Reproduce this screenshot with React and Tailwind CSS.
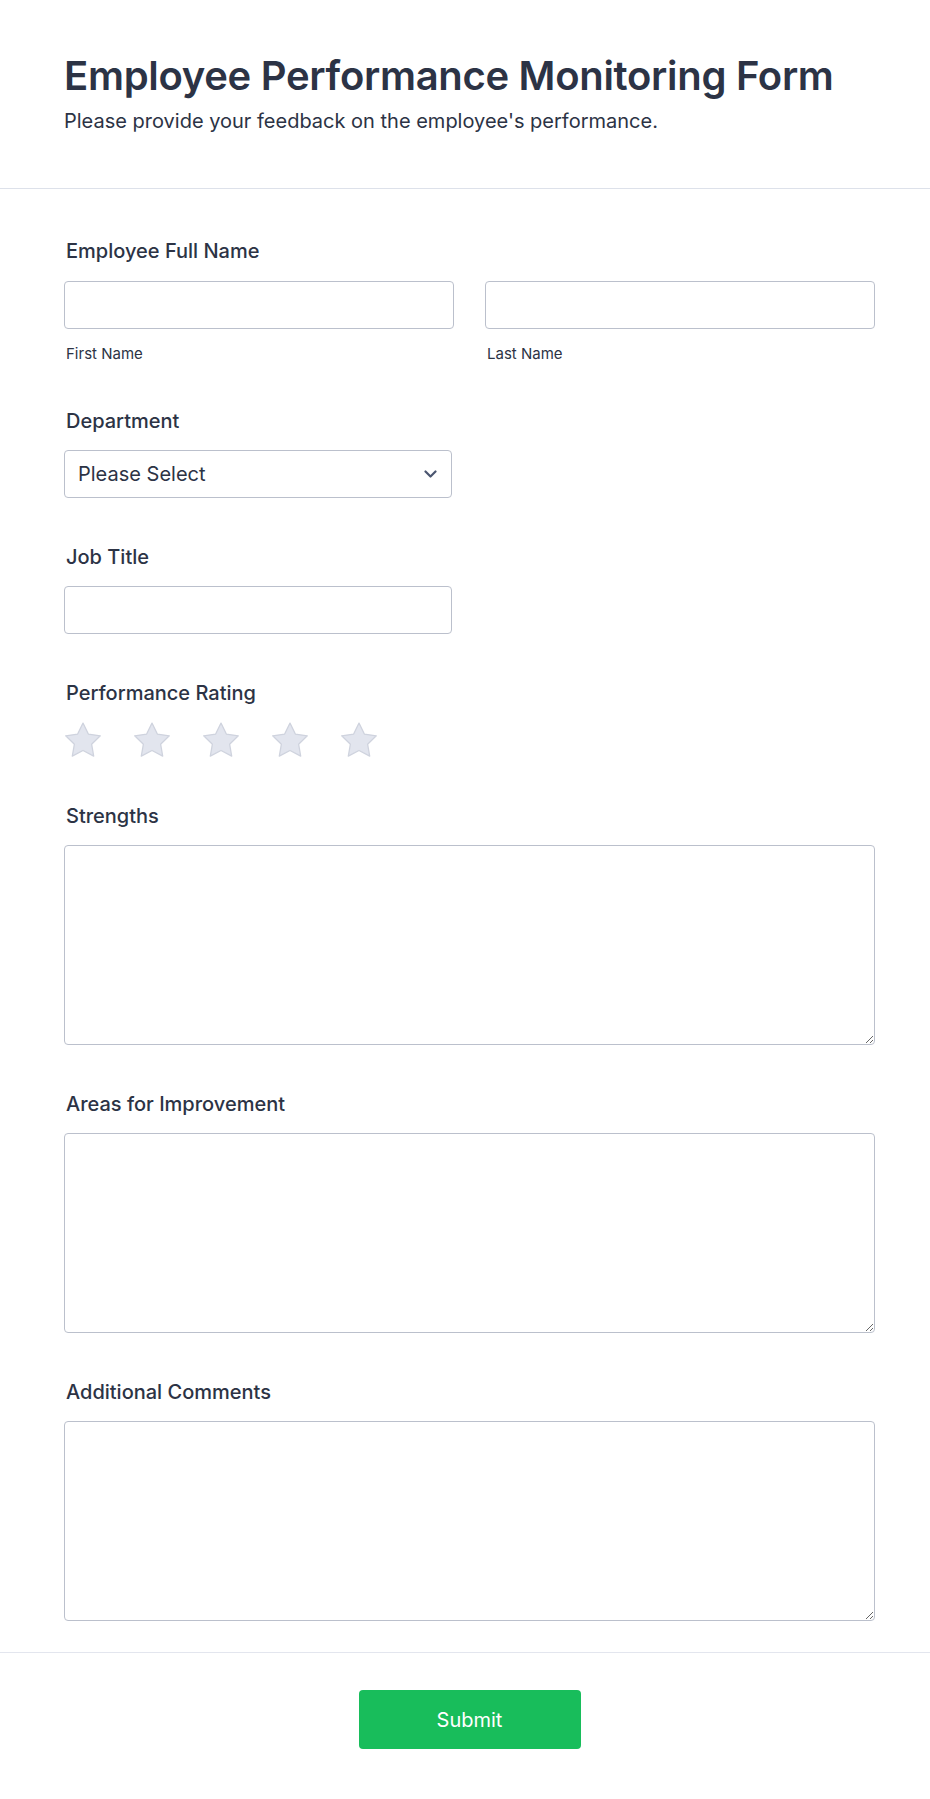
import React from "react";

function Star() {
  return (
    <svg width="38" height="35" viewBox="1.9 1.7 20.2 19.3" className="shrink-0">
      <path
        d="M12 2.3l2.95 6.05 6.6.95-4.8 4.63 1.15 6.57L12 17.4l-5.9 3.1 1.15-6.57-4.8-4.63 6.6-.95L12 2.3z"
        fill="#e2e5ee"
        stroke="#cfd3de"
        strokeWidth="0.7"
        strokeLinejoin="round"
      />
    </svg>
  );
}

function Label({ children }) {
  return (
    <div className="pl-[2px] text-[20px] leading-6 font-medium text-[#2c3345]">{children}</div>
  );
}

function TextArea() {
  return (
    <textarea className="block w-full h-[200px] rounded-[4px] border border-[#bbc0cc] bg-white resize-y outline-none" />
  );
}

export default function App() {
  return (
    <div className="w-full bg-white text-[#2c3345]" style={{ fontFamily: "Inter, 'Noto Sans', sans-serif" }}>
      <header className="pl-16 pr-[55px] pt-[52px] pb-[55px] border-b border-[#dde1ea]">
        <h1 className="text-[40px] leading-[48px] font-semibold tracking-[-0.3px]">
          Employee Performance Monitoring Form
        </h1>
        <p className="mt-[9px] text-[20px] leading-6">
          Please provide your feedback on the employee's performance.
        </p>
      </header>

      <main className="pl-16 pr-[55px] pt-[50px] pb-[31px] border-b border-[#e3e6ee] flex flex-col gap-[47px]">
        <div className="flex flex-col">
          <Label>Employee Full Name</Label>
          <div className="mt-[18px] grid grid-cols-2 gap-[31px]">
            <div>
              <input className="block w-full h-12 rounded-[4px] border border-[#bbc0cc] outline-none" />
              <div className="mt-4 pl-[2px] text-[15px] leading-[17px]">First Name</div>
            </div>
            <div>
              <input className="block w-full h-12 rounded-[4px] border border-[#bbc0cc] outline-none" />
              <div className="mt-4 pl-[2px] text-[15px] leading-[17px]">Last Name</div>
            </div>
          </div>
        </div>

        <div className="flex flex-col">
          <Label>Department</Label>
          <div className="mt-[17px] w-[388px] h-12 rounded-[4px] border border-[#bbc0cc] flex items-center justify-between pl-[13px] pr-[14px]">
            <span className="text-[20px]">Please Select</span>
            <svg width="13" height="8" viewBox="0 0 13 8" fill="none">
              <path d="M1.5 1.5l5 5 5-5" stroke="#4b5670" strokeWidth="2.2" strokeLinecap="round" strokeLinejoin="round" />
            </svg>
          </div>
        </div>

        <div className="flex flex-col">
          <Label>Job Title</Label>
          <input className="mt-[17px] block w-[388px] h-12 rounded-[4px] border border-[#bbc0cc] outline-none" />
        </div>

        <div className="flex flex-col">
          <Label>Performance Rating</Label>
          <div className="mt-[17px] flex gap-[31px]">
            <Star />
            <Star />
            <Star />
            <Star />
            <Star />
          </div>
        </div>

        <div className="flex flex-col">
          <Label>Strengths</Label>
          <div className="mt-[17px]">
            <TextArea />
          </div>
        </div>

        <div className="flex flex-col">
          <Label>Areas for Improvement</Label>
          <div className="mt-[17px]">
            <TextArea />
          </div>
        </div>

        <div className="flex flex-col">
          <Label>Additional Comments</Label>
          <div className="mt-[17px]">
            <TextArea />
          </div>
        </div>
      </main>

      <footer className="flex justify-center pl-16 pr-[55px] pt-[37px] pb-[50px]">
        <button className="w-[222px] h-[59px] rounded-[4px] bg-[#18bd5b] text-white text-[20px]">
          Submit
        </button>
      </footer>
    </div>
  );
}
